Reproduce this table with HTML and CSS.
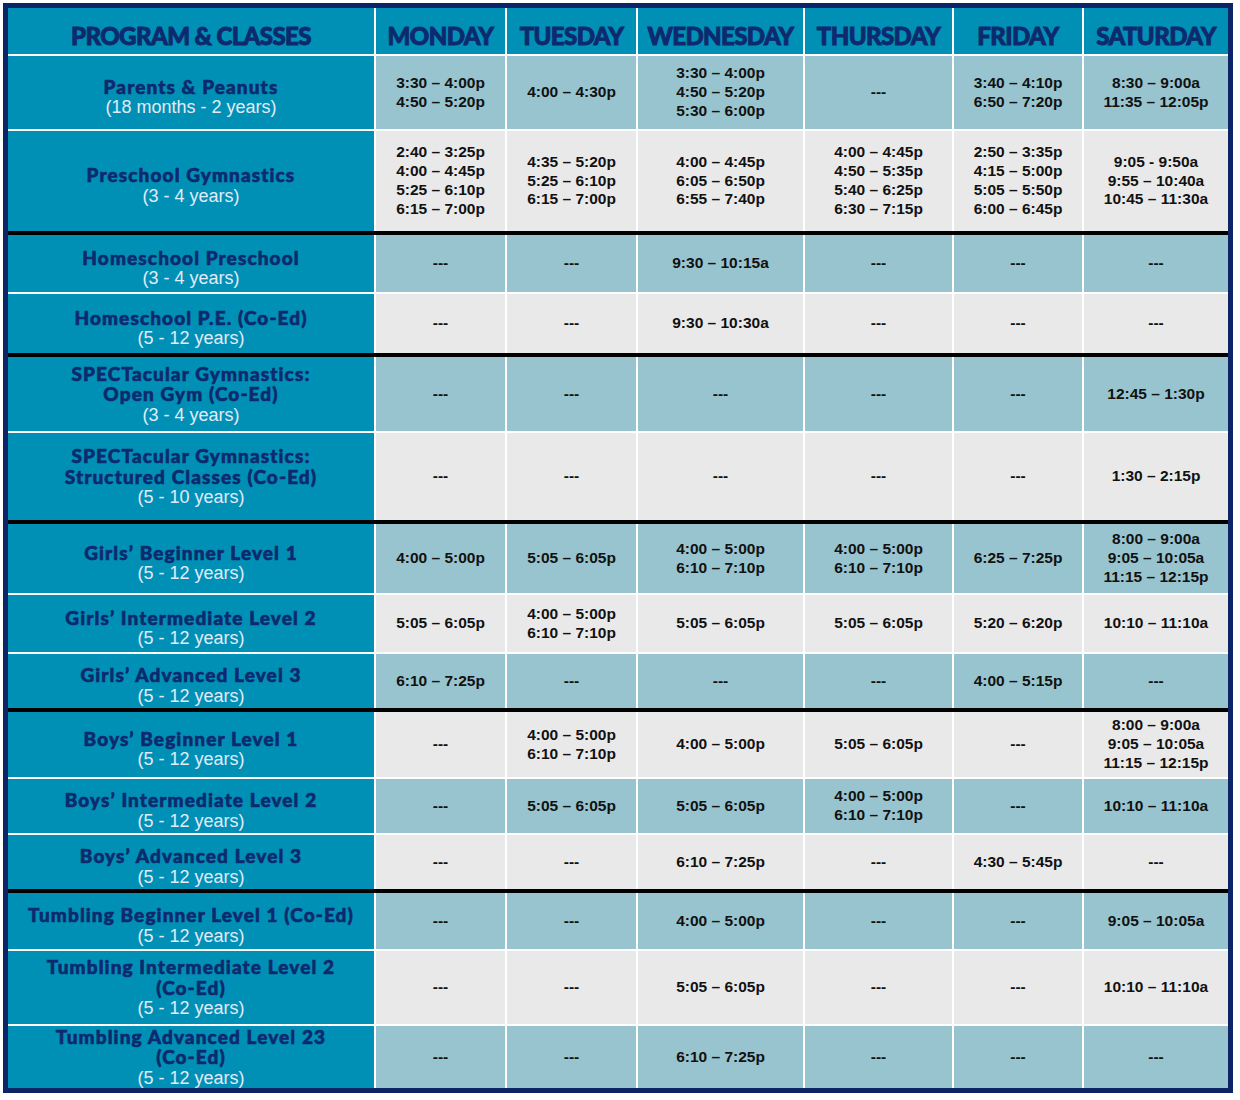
FILE: index.html
```html
<!DOCTYPE html>
<html lang="en">
<head>
<meta charset="utf-8">
<title>Program &amp; Classes Schedule</title>
<link rel="stylesheet" href="styles.css">
</head>
<body>
<div class="schedule">
  <div class="row head">
    <div class="cell prog">PROGRAM &amp; CLASSES</div>
    <div class="cell day">MONDAY</div>
    <div class="cell day">TUESDAY</div>
    <div class="cell day">WEDNESDAY</div>
    <div class="cell day">THURSDAY</div>
    <div class="cell day">FRIDAY</div>
    <div class="cell day">SATURDAY</div>
  </div>

  <div class="row teal h73">
    <div class="cell name"><span class="title">Parents &amp; Peanuts</span><span class="age">(18 months - 2 years)</span></div>
    <div class="cell time">3:30 – 4:00p<br>4:50 – 5:20p</div>
    <div class="cell time">4:00 – 4:30p</div>
    <div class="cell time">3:30 – 4:00p<br>4:50 – 5:20p<br>5:30 – 6:00p</div>
    <div class="cell time">---</div>
    <div class="cell time">3:40 – 4:10p<br>6:50 – 7:20p</div>
    <div class="cell time">8:30 – 9:00a<br>11:35 – 12:05p</div>
  </div>

  <div class="row gray h100">
    <div class="cell name"><span class="title">Preschool Gymnastics</span><span class="age">(3 - 4 years)</span></div>
    <div class="cell time">2:40 – 3:25p<br>4:00 – 4:45p<br>5:25 – 6:10p<br>6:15 – 7:00p</div>
    <div class="cell time">4:35 – 5:20p<br>5:25 – 6:10p<br>6:15 – 7:00p</div>
    <div class="cell time">4:00 – 4:45p<br>6:05 – 6:50p<br>6:55 – 7:40p</div>
    <div class="cell time">4:00 – 4:45p<br>4:50 – 5:35p<br>5:40 – 6:25p<br>6:30 – 7:15p</div>
    <div class="cell time">2:50 – 3:35p<br>4:15 – 5:00p<br>5:05 – 5:50p<br>6:00 – 6:45p</div>
    <div class="cell time">9:05 - 9:50a<br>9:55 – 10:40a<br>10:45 – 11:30a</div>
  </div>

  <div class="row teal group h57">
    <div class="cell name"><span class="title">Homeschool Preschool</span><span class="age">(3 - 4 years)</span></div>
    <div class="cell time">---</div>
    <div class="cell time">---</div>
    <div class="cell time">9:30 – 10:15a</div>
    <div class="cell time">---</div>
    <div class="cell time">---</div>
    <div class="cell time">---</div>
  </div>

  <div class="row gray h59">
    <div class="cell name"><span class="title">Homeschool P.E. (Co-Ed)</span><span class="age">(5 - 12 years)</span></div>
    <div class="cell time">---</div>
    <div class="cell time">---</div>
    <div class="cell time">9:30 – 10:30a</div>
    <div class="cell time">---</div>
    <div class="cell time">---</div>
    <div class="cell time">---</div>
  </div>

  <div class="row teal group h74">
    <div class="cell name multi"><span class="title">SPECTacular Gymnastics:</span><span class="title">Open Gym (Co-Ed)</span><span class="age">(3 - 4 years)</span></div>
    <div class="cell time">---</div>
    <div class="cell time">---</div>
    <div class="cell time">---</div>
    <div class="cell time">---</div>
    <div class="cell time">---</div>
    <div class="cell time">12:45 – 1:30p</div>
  </div>

  <div class="row gray h87">
    <div class="cell name multi"><span class="title">SPECTacular Gymnastics:</span><span class="title">Structured Classes (Co-Ed)</span><span class="age">(5 - 10 years)</span></div>
    <div class="cell time">---</div>
    <div class="cell time">---</div>
    <div class="cell time">---</div>
    <div class="cell time">---</div>
    <div class="cell time">---</div>
    <div class="cell time">1:30 – 2:15p</div>
  </div>

  <div class="row teal group h69">
    <div class="cell name"><span class="title">Girls’ Beginner Level 1</span><span class="age">(5 - 12 years)</span></div>
    <div class="cell time">4:00 – 5:00p</div>
    <div class="cell time">5:05 – 6:05p</div>
    <div class="cell time">4:00 – 5:00p<br>6:10 – 7:10p</div>
    <div class="cell time">4:00 – 5:00p<br>6:10 – 7:10p</div>
    <div class="cell time">6:25 – 7:25p</div>
    <div class="cell time">8:00 – 9:00a<br>9:05 – 10:05a<br>11:15 – 12:15p</div>
  </div>

  <div class="row gray h57">
    <div class="cell name"><span class="title">Girls’ Intermediate Level 2</span><span class="age">(5 - 12 years)</span></div>
    <div class="cell time">5:05 – 6:05p</div>
    <div class="cell time">4:00 – 5:00p<br>6:10 – 7:10p</div>
    <div class="cell time">5:05 – 6:05p</div>
    <div class="cell time">5:05 – 6:05p</div>
    <div class="cell time">5:20 – 6:20p</div>
    <div class="cell time">10:10 – 11:10a</div>
  </div>

  <div class="row teal h54">
    <div class="cell name"><span class="title">Girls’ Advanced Level 3</span><span class="age">(5 - 12 years)</span></div>
    <div class="cell time">6:10 – 7:25p</div>
    <div class="cell time">---</div>
    <div class="cell time">---</div>
    <div class="cell time">---</div>
    <div class="cell time">4:00 – 5:15p</div>
    <div class="cell time">---</div>
  </div>

  <div class="row gray group h65">
    <div class="cell name"><span class="title">Boys’ Beginner Level 1</span><span class="age">(5 - 12 years)</span></div>
    <div class="cell time">---</div>
    <div class="cell time">4:00 – 5:00p<br>6:10 – 7:10p</div>
    <div class="cell time">4:00 – 5:00p</div>
    <div class="cell time">5:05 – 6:05p</div>
    <div class="cell time">---</div>
    <div class="cell time">8:00 – 9:00a<br>9:05 – 10:05a<br>11:15 – 12:15p</div>
  </div>

  <div class="row teal h54">
    <div class="cell name"><span class="title">Boys’ Intermediate Level 2</span><span class="age">(5 - 12 years)</span></div>
    <div class="cell time">---</div>
    <div class="cell time">5:05 – 6:05p</div>
    <div class="cell time">5:05 – 6:05p</div>
    <div class="cell time">4:00 – 5:00p<br>6:10 – 7:10p</div>
    <div class="cell time">---</div>
    <div class="cell time">10:10 – 11:10a</div>
  </div>

  <div class="row gray h54">
    <div class="cell name"><span class="title">Boys’ Advanced Level 3</span><span class="age">(5 - 12 years)</span></div>
    <div class="cell time">---</div>
    <div class="cell time">---</div>
    <div class="cell time">6:10 – 7:25p</div>
    <div class="cell time">---</div>
    <div class="cell time">4:30 – 5:45p</div>
    <div class="cell time">---</div>
  </div>

  <div class="row teal group h56">
    <div class="cell name"><span class="title">Tumbling Beginner Level 1 (Co-Ed)</span><span class="age">(5 - 12 years)</span></div>
    <div class="cell time">---</div>
    <div class="cell time">---</div>
    <div class="cell time">4:00 – 5:00p</div>
    <div class="cell time">---</div>
    <div class="cell time">---</div>
    <div class="cell time">9:05 – 10:05a</div>
  </div>

  <div class="row gray h73">
    <div class="cell name multi"><span class="title">Tumbling Intermediate Level 2</span><span class="title">(Co-Ed)</span><span class="age">(5 - 12 years)</span></div>
    <div class="cell time">---</div>
    <div class="cell time">---</div>
    <div class="cell time">5:05 – 6:05p</div>
    <div class="cell time">---</div>
    <div class="cell time">---</div>
    <div class="cell time">10:10 – 11:10a</div>
  </div>

  <div class="row teal h62">
    <div class="cell name multi"><span class="title">Tumbling Advanced Level 23</span><span class="title">(Co-Ed)</span><span class="age">(5 - 12 years)</span></div>
    <div class="cell time">---</div>
    <div class="cell time">---</div>
    <div class="cell time">6:10 – 7:25p</div>
    <div class="cell time">---</div>
    <div class="cell time">---</div>
    <div class="cell time">---</div>
  </div>
</div>
</body>
</html>
```

FILE: styles.css
```css
html, body {
  margin: 0;
  padding: 0;
  background: #ffffff;
}

body {
  padding: 3px;
  font-family: "Liberation Sans", Arial, sans-serif;
}

.schedule {
  width: 1220px;
  border: 5px solid #0b2566;
  display: flex;
  flex-direction: column;
  background: #0190b5;
}

.row {
  display: grid;
  grid-template-columns: 366px 129px 129px 165px 147px 128px 144px;
  column-gap: 2px;
  background: #ffffff;
  border-top: 2px solid #ffffff;
}

.row.head {
  border-top: 0;
  height: 46px;
}

.row.group {
  border-top: 4px solid #000000;
}

.h54 { height: 54px; }
.h56 { height: 56px; }
.h57 { height: 57px; }
.h59 { height: 59px; }
.h62 { height: 62px; }
.h65 { height: 65px; }
.h69 { height: 69px; }
.h73 { height: 73px; }
.h74 { height: 74px; }
.h87 { height: 87px; }
.h100 { height: 100px; }

.cell {
  display: flex;
  flex-direction: column;
  align-items: center;
  justify-content: center;
  text-align: center;
  min-width: 0;
  box-sizing: border-box;
}

.head .cell {
  background: #0190b5;
  color: #0d2a6e;
  font-family: "Lato", "Inter", "DejaVu Sans", sans-serif;
  font-weight: 900;
  font-size: 24px;
  letter-spacing: -0.6px;
  -webkit-text-stroke: 0.9px #0d2a6e;
  padding-top: 8px;
}

.cell.name {
  background: #0190b5;
  padding-top: 9px;
}

.cell.name.multi {
  padding-top: 0;
}

.title {
  display: block;
  color: #0d2a6e;
  font-family: "Lato", "Inter", "DejaVu Sans", sans-serif;
  font-weight: 900;
  font-size: 19px;
  line-height: 20.5px;
  letter-spacing: 1.1px;
  -webkit-text-stroke: 0.6px #0d2a6e;
}

.age {
  display: block;
  color: #e2ebf8;
  font-family: "Liberation Sans", Arial, sans-serif;
  font-size: 18px;
  line-height: 20px;
}

.time {
  color: #111111;
  font-weight: 700;
  font-size: 15.5px;
  line-height: 18.8px;
}

.teal .time { background: #97c4ce; }
.gray .time { background: #e9e9e9; }
```
